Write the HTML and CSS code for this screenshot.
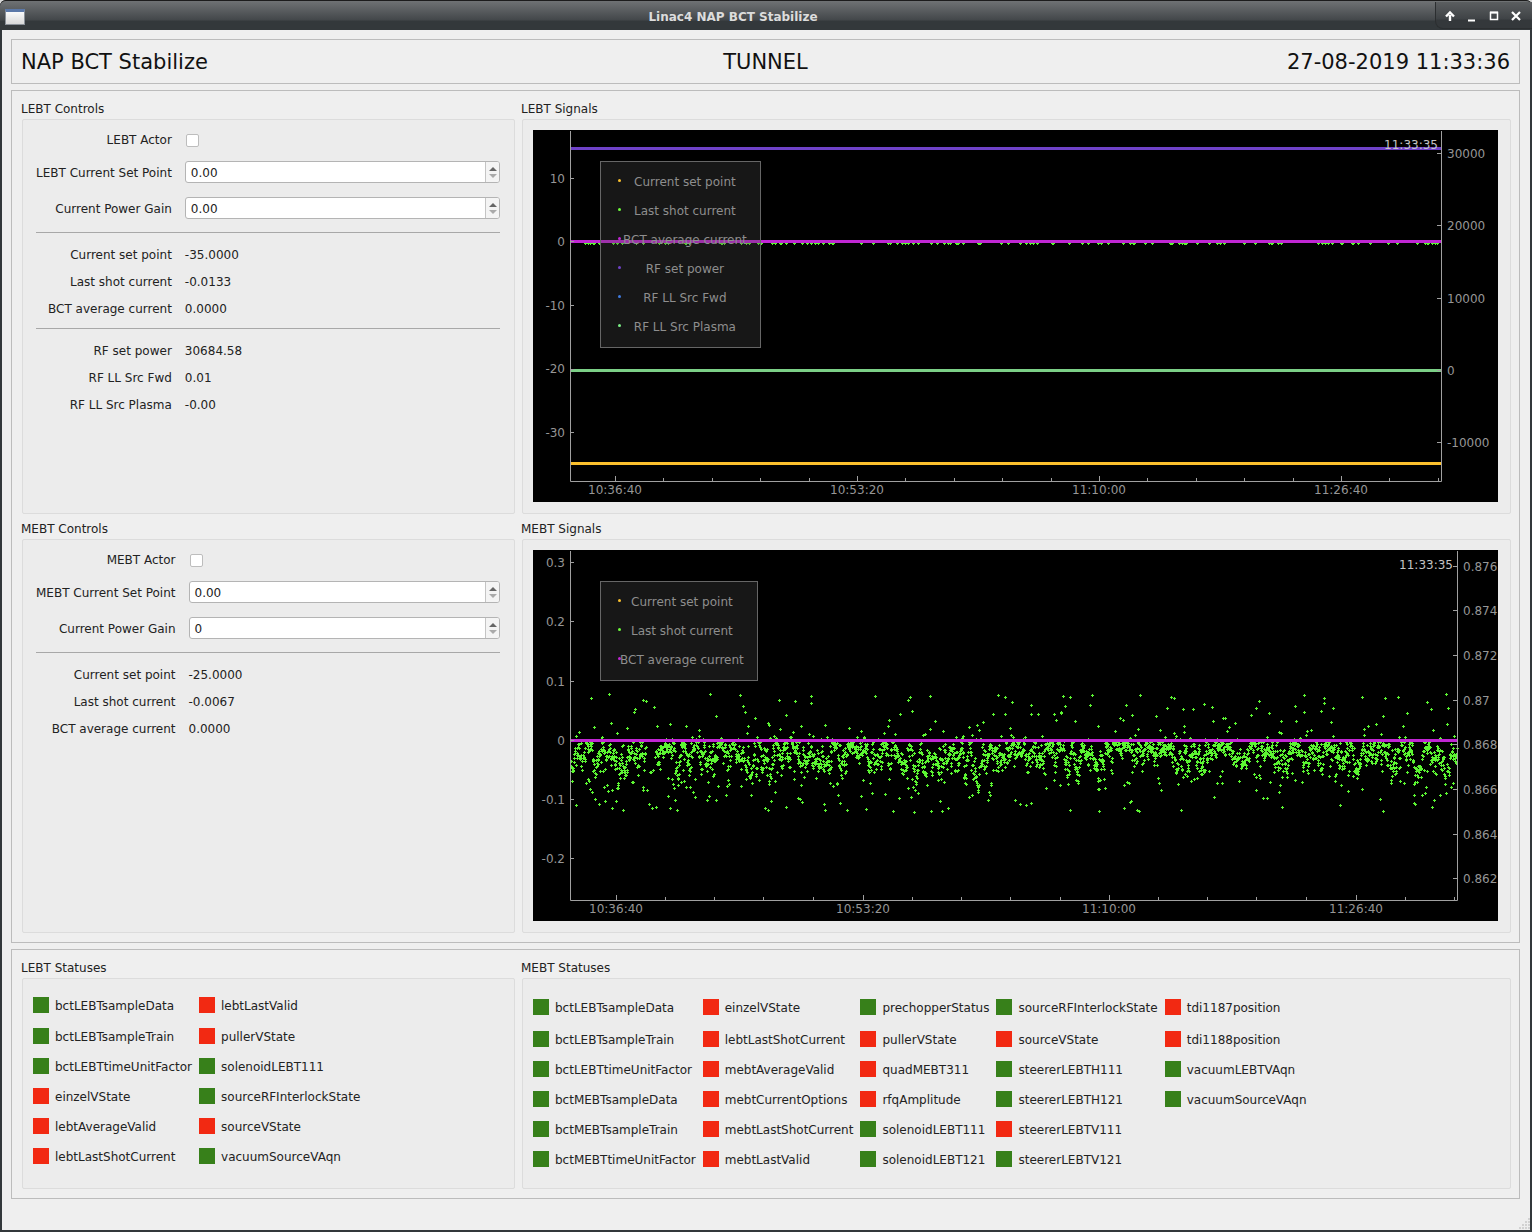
FILE: index.html
```html
<!DOCTYPE html>
<html lang="en">
<head>
    <meta charset="UTF-8">
    <title>Linac4 NAP BCT Stabilize</title>
    <link rel="stylesheet" href="styles.css">
</head>
<body>
<div class="window">
    <div class="titlebar">
        <span class="window-icon"></span>
        <span class="window-title">Linac4 NAP BCT Stabilize</span>
        <div class="window-buttons">
            <svg viewBox="0 0 88 16" width="88" height="16">
                <path d="M7 13V7M3 8.5L7 4.5L11 8.5" fill="none" stroke="#fff" stroke-width="2.4"/>
                <path d="M25 12.5h7" fill="none" stroke="#fff" stroke-width="2"/>
                <path d="M47.5 4.5h7v7h-7z" fill="none" stroke="#fff" stroke-width="1.5"/>
                <path d="M47 4.5h8" fill="none" stroke="#fff" stroke-width="2"/>
                <path d="M69 4L77 12M77 4L69 12" fill="none" stroke="#fff" stroke-width="2.2"/>
            </svg>
        </div>
    </div>

    <div class="content">
        <!-- header -->
        <div class="box header">
            <span>NAP BCT Stabilize</span>
            <span>TUNNEL</span>
            <span class="header-date">27-08-2019 11:33:36</span>
        </div>

        <!-- controls and signals -->
        <div class="box main-grid">
            <section class="group">
                <h2>LEBT Controls</h2>
                <div class="group-body form">
                    <label class="form-label">LEBT Actor</label>
                    <span class="checkbox"></span>
                    <label class="form-label spaced">LEBT Current Set Point</label>
                    <div class="spin spaced"><span class="spin-value">0.00</span><span class="spin-arrows"><i class="up"></i><i class="down"></i></span></div>
                    <label class="form-label spaced">Current Power Gain</label>
                    <div class="spin spaced"><span class="spin-value">0.00</span><span class="spin-arrows"><i class="up"></i><i class="down"></i></span></div>
                    <hr class="rule first">
                    <label class="read-label">Current set point</label><span class="read-value">-35.0000</span>
                    <label class="read-label">Last shot current</label><span class="read-value">-0.0133</span>
                    <label class="read-label">BCT average current</label><span class="read-value">0.0000</span>
                    <hr class="rule">
                    <label class="read-label">RF set power</label><span class="read-value">30684.58</span>
                    <label class="read-label">RF LL Src Fwd</label><span class="read-value">0.01</span>
                    <label class="read-label">RF LL Src Plasma</label><span class="read-value">-0.00</span>
                </div>
            </section>

            <section class="group">
                <h2>LEBT Signals</h2>
                <div class="group-body plot-wrap">
                    <div class="plot">
                        <svg class="plot-svg" viewBox="0 0 965 372" width="965" height="372">
                            <path id="lebtDots" class="dots"/>
                            <path class="curve" stroke="#6f42c8" d="M38 18.5H908"/>
                            <path class="curve" stroke="#c026d3" d="M38 111.5H908"/>
                            <path class="curve" stroke="#7bcf86" d="M38 240.5H908"/>
                            <path class="curve" stroke="#fbc02d" d="M38 333.5H908"/>
                            <path class="axis" d="M37.5 1V351.5H908.5V1"/>
                            <path class="axis" d="M37 48.5h4M37 111.5h4M37 175.5h4M37 239.5h4M37 302.5h4M904 23.5h4M904 95.5h4M904 168.5h4M904 240.5h4M904 312.5h4"/>
                            <path class="axis" d="M82.5 346v5M324.5 346v5M566.5 346v5M808.5 346v5M130.5 348v3M179.5 348v3M227.5 348v3M276.5 348v3M372.5 348v3M421.5 348v3M469.5 348v3M518.5 348v3M614.5 348v3M663.5 348v3M711.5 348v3M760.5 348v3M856.5 348v3M905.5 348v3"/>
                            <g class="tick-left">
                                <text x="32" y="53">10</text><text x="32" y="116">0</text><text x="32" y="180">-10</text><text x="32" y="243">-20</text><text x="32" y="307">-30</text>
                            </g>
                            <g class="tick-right">
                                <text x="914" y="28">30000</text><text x="914" y="100">20000</text><text x="914" y="173">10000</text><text x="914" y="245">0</text><text x="914" y="317">-10000</text>
                            </g>
                            <g class="tick-bottom">
                                <text x="82" y="364">10:36:40</text><text x="324" y="364">10:53:20</text><text x="566" y="364">11:10:00</text><text x="808" y="364">11:26:40</text>
                            </g>
                            <text class="plot-time" x="905" y="19">11:33:35</text>
                        </svg>
                        <div class="legend legend-long">
                            <i style="color:#fbc02d"></i><span>Current set point</span>
                            <i style="color:#6dfc3c"></i><span>Last shot current</span>
                            <i style="color:#c026d3"></i><span>BCT average current</span>
                            <i style="color:#6f42c8"></i><span>RF set power</span>
                            <i style="color:#3f7be0"></i><span>RF LL Src Fwd</span>
                            <i style="color:#7bef86"></i><span>RF LL Src Plasma</span>
                        </div>
                    </div>
                </div>
            </section>

            <section class="group">
                <h2>MEBT Controls</h2>
                <div class="group-body form">
                    <label class="form-label">MEBT Actor</label>
                    <span class="checkbox"></span>
                    <label class="form-label spaced">MEBT Current Set Point</label>
                    <div class="spin spaced"><span class="spin-value">0.00</span><span class="spin-arrows"><i class="up"></i><i class="down"></i></span></div>
                    <label class="form-label spaced">Current Power Gain</label>
                    <div class="spin spaced"><span class="spin-value">0</span><span class="spin-arrows"><i class="up"></i><i class="down"></i></span></div>
                    <hr class="rule first">
                    <label class="read-label">Current set point</label><span class="read-value">-25.0000</span>
                    <label class="read-label">Last shot current</label><span class="read-value">-0.0067</span>
                    <label class="read-label">BCT average current</label><span class="read-value">0.0000</span>
                </div>
            </section>

            <section class="group">
                <h2>MEBT Signals</h2>
                <div class="group-body plot-wrap">
                    <div class="plot">
                        <svg class="plot-svg" viewBox="0 0 965 371" width="965" height="371">
                            <path id="mebtDots" class="dots"/>
                            <path class="curve" stroke="#c026d3" d="M38 190.5H924"/>
                            <path class="axis" d="M37.5 1V350.5H924.5V1"/>
                            <path class="axis" d="M37 12.5h4M37 71.5h4M37 131.5h4M37 190.5h4M37 249.5h4M37 308.5h4M920 16.5h4M920 60.5h4M920 105.5h4M920 150.5h4M920 194.5h4M920 239.5h4M920 284.5h4M920 328.5h4"/>
                            <path class="axis" d="M83.5 345v5M330.5 345v5M576.5 345v5M823.5 345v5M132.5 347v3M181.5 347v3M230.5 347v3M280.5 347v3M379.5 347v3M428.5 347v3M477.5 347v3M527.5 347v3M625.5 347v3M674.5 347v3M723.5 347v3M773.5 347v3M872.5 347v3M921.5 347v3"/>
                            <g class="tick-left">
                                <text x="32" y="17">0.3</text><text x="32" y="76">0.2</text><text x="32" y="136">0.1</text><text x="32" y="195">0</text><text x="32" y="254">-0.1</text><text x="32" y="313">-0.2</text>
                            </g>
                            <g class="tick-right">
                                <text x="930" y="21">0.876</text><text x="930" y="65">0.874</text><text x="930" y="110">0.872</text><text x="930" y="155">0.87</text><text x="930" y="199">0.868</text><text x="930" y="244">0.866</text><text x="930" y="289">0.864</text><text x="930" y="333">0.862</text>
                            </g>
                            <g class="tick-bottom">
                                <text x="83" y="363">10:36:40</text><text x="330" y="363">10:53:20</text><text x="576" y="363">11:10:00</text><text x="823" y="363">11:26:40</text>
                            </g>
                            <text class="plot-time" x="920" y="19">11:33:35</text>
                        </svg>
                        <div class="legend">
                            <i style="color:#fbc02d"></i><span>Current set point</span>
                            <i style="color:#6dfc3c"></i><span>Last shot current</span>
                            <i style="color:#c026d3"></i><span>BCT average current</span>
                        </div>
                    </div>
                </div>
            </section>
        </div>

        <!-- statuses -->
        <div class="box status-grid">
            <section class="group">
                <h2>LEBT Statuses</h2>
                <div class="group-body status-list status-lebt">
                    <div class="status"><b class="ok"></b>bctLEBTsampleData</div>
                    <div class="status"><b class="ok"></b>bctLEBTsampleTrain</div>
                    <div class="status"><b class="ok"></b>bctLEBTtimeUnitFactor</div>
                    <div class="status"><b class="bad"></b>einzelVState</div>
                    <div class="status"><b class="bad"></b>lebtAverageValid</div>
                    <div class="status"><b class="bad"></b>lebtLastShotCurrent</div>
                    <div class="status"><b class="bad"></b>lebtLastValid</div>
                    <div class="status"><b class="bad"></b>pullerVState</div>
                    <div class="status"><b class="ok"></b>solenoidLEBT111</div>
                    <div class="status"><b class="ok"></b>sourceRFInterlockState</div>
                    <div class="status"><b class="bad"></b>sourceVState</div>
                    <div class="status"><b class="ok"></b>vacuumSourceVAqn</div>
                </div>
            </section>
            <section class="group">
                <h2>MEBT Statuses</h2>
                <div class="group-body status-list status-mebt">
                    <div class="status"><b class="ok"></b>bctLEBTsampleData</div>
                    <div class="status"><b class="ok"></b>bctLEBTsampleTrain</div>
                    <div class="status"><b class="ok"></b>bctLEBTtimeUnitFactor</div>
                    <div class="status"><b class="ok"></b>bctMEBTsampleData</div>
                    <div class="status"><b class="ok"></b>bctMEBTsampleTrain</div>
                    <div class="status"><b class="ok"></b>bctMEBTtimeUnitFactor</div>
                    <div class="status"><b class="bad"></b>einzelVState</div>
                    <div class="status"><b class="bad"></b>lebtLastShotCurrent</div>
                    <div class="status"><b class="bad"></b>mebtAverageValid</div>
                    <div class="status"><b class="bad"></b>mebtCurrentOptions</div>
                    <div class="status"><b class="bad"></b>mebtLastShotCurrent</div>
                    <div class="status"><b class="bad"></b>mebtLastValid</div>
                    <div class="status"><b class="ok"></b>prechopperStatus</div>
                    <div class="status"><b class="bad"></b>pullerVState</div>
                    <div class="status"><b class="bad"></b>quadMEBT311</div>
                    <div class="status"><b class="bad"></b>rfqAmplitude</div>
                    <div class="status"><b class="ok"></b>solenoidLEBT111</div>
                    <div class="status"><b class="ok"></b>solenoidLEBT121</div>
                    <div class="status"><b class="ok"></b>sourceRFInterlockState</div>
                    <div class="status"><b class="bad"></b>sourceVState</div>
                    <div class="status"><b class="ok"></b>steererLEBTH111</div>
                    <div class="status"><b class="ok"></b>steererLEBTH121</div>
                    <div class="status"><b class="bad"></b>steererLEBTV111</div>
                    <div class="status"><b class="ok"></b>steererLEBTV121</div>
                    <div class="status"><b class="bad"></b>tdi1187position</div>
                    <div class="status"><b class="bad"></b>tdi1188position</div>
                    <div class="status"><b class="ok"></b>vacuumLEBTVAqn</div>
                    <div class="status"><b class="ok"></b>vacuumSourceVAqn</div>
                </div>
            </section>
        </div>

        <svg class="size-grip" viewBox="0 0 12 12" width="12" height="12">
            <path d="M10 1h2v2h-2zM10 4h2v2h-2zM7 4h2v2h-2zM10 7h2v2h-2zM7 7h2v2h-2zM4 7h2v2h-2zM10 10h2v2h-2zM7 10h2v2h-2zM4 10h2v2h-2zM1 10h2v2h-2z" fill="#d2d2d2"/>
        </svg>
    </div>
</div>
<script src="plots.js"></script>
</body>
</html>
```

FILE: styles.css
```css
* {
    box-sizing: border-box;
}
html, body {
    margin: 0;
    height: 100%;
}
body {
    background-color: #d8d8d8;
    font-family: "DejaVu Sans", sans-serif;
    font-size: 12px;
    color: #222;
    overflow: hidden;
}
.window {
    width: 1532px;
    height: 1232px;
    display: flex;
    flex-direction: column;
    background-color: #33383b;
    border-radius: 6px 6px 0 0;
    padding: 0 2px 2px;
}
.titlebar {
    height: 30px;
    margin: 0 -2px;
    display: flex;
    align-items: center;
    border-radius: 6px 6px 0 0;
    border-top: 1px solid #1c1c1c;
    background: linear-gradient(#6f7274, #43474a 19px, #33383b 20px);
}
.window-icon {
    width: 20px;
    height: 16px;
    margin: 2px 0 0 5px;
    border: 1px solid #8a9098;
    border-top: 3px solid #5b78a8;
    background: linear-gradient(#fafafa, #d8d8d8);
}
.window-title {
    flex: 1;
    padding: 3px 0 0 6px;
    text-align: center;
    color: #dcdcdc;
    font-weight: bold;
    font-size: 12px;
}
.window-buttons {
    width: 97px;
    height: 27px;
    padding: 6px 0 0 7px;
    background: linear-gradient(#5b5e60, #3f4346 17px, #34383b 18px);
    border-left: 1px solid #2b2e30;
    border-bottom: 1px solid #2b2e30;
    border-radius: 0 0 0 8px;
}
.window-buttons svg {
    display: block;
}
.content {
    flex: 1;
    position: relative;
    background-color: #efefef;
    padding: 9px 10px 0 9px;
}
.size-grip {
    position: absolute;
    right: 0;
    bottom: 1px;
}
.box {
    border: 1px solid #bcbcbc;
}
.header {
    height: 45px;
    margin-bottom: 6px;
    padding: 0 9px;
    display: grid;
    grid-template-columns: 1fr auto 1fr;
    align-items: center;
    font-size: 21px;
    color: #111;
}
.header-date {
    text-align: right;
}
.main-grid {
    height: 853px;
    margin-bottom: 6px;
    padding: 8px 9px 0 10px;
    display: grid;
    grid-template-columns: 493px 989px;
    grid-template-rows: 415px 414px;
    gap: 5px 7px;
}
.status-grid {
    height: 250px;
    padding: 8px 9px 0 10px;
    display: grid;
    grid-template-columns: 493px 989px;
    column-gap: 7px;
    grid-template-rows: 231px;
}
.group {
    display: flex;
    flex-direction: column;
    min-width: 0;
}
.group h2 {
    margin: 0;
    height: 20px;
    line-height: 20px;
    font-size: 12px;
    font-weight: normal;
    color: #222;
    margin-left: -1px;
}
.group-body {
    flex: 1;
    background-color: #ececec;
    border: 1px solid #dcdcdc;
    border-radius: 2px;
}

/* form */
.form {
    display: grid;
    grid-template-columns: auto 1fr;
    align-content: start;
    column-gap: 13px;
    padding: 11px 14px 0 13px;
}
.form-label {
    text-align: right;
    align-self: center;
    padding-top: 2px;
}
.spaced {
    margin-top: 14px;
}
.checkbox {
    width: 13px;
    height: 13px;
    margin: 2px 0 0 1px;
    align-self: center;
    background-color: #fff;
    border: 1px solid #bdbdbd;
    border-radius: 2px;
}
.spin {
    height: 22px;
    display: flex;
    background-color: #fff;
    border: 1px solid #b4b4b4;
    border-radius: 3px;
}
.spin-value {
    flex: 1;
    line-height: 22px;
    padding-left: 5px;
}
.spin-arrows {
    width: 14px;
    background-color: #f4f4f4;
    border-left: 1px solid #c4c4c4;
    border-radius: 0 2px 2px 0;
    display: flex;
    flex-direction: column;
    align-items: center;
    justify-content: center;
    gap: 3px;
}
.spin-arrows i {
    border-left: 4px solid transparent;
    border-right: 4px solid transparent;
}
.spin-arrows .up {
    border-bottom: 4px solid #666;
}
.spin-arrows .down {
    border-top: 4px solid #aaa;
}
.rule {
    grid-column: 1 / 3;
    width: 100%;
    height: 1px;
    border: 0;
    margin: 5px 0 9px;
    background-color: #a8a8a8;
}
.rule.first {
    margin-top: 13px;
}
.read-label {
    text-align: right;
    line-height: 27px;
}
.read-value {
    line-height: 27px;
}

/* plots */
.plot-wrap {
    padding: 10px 12px 0 10px;
}
.plot {
    position: relative;
    background-color: #000;
}
.plot-svg {
    display: block;
    font-size: 12px;
}
.axis {
    fill: none;
    stroke: #a0a0a0;
    stroke-width: 1;
}
.curve {
    fill: none;
    stroke-width: 3;
}
.dots {
    fill: none;
    stroke: #5cf532;
    stroke-width: 1;
}
.plot-svg text {
    fill: #969696;
}
.tick-left text {
    text-anchor: end;
}
.tick-bottom text {
    text-anchor: middle;
}
.plot-svg .plot-time {
    fill: #c4c4c4;
    text-anchor: end;
}
.legend {
    position: absolute;
    left: 67px;
    top: 31px;
    display: grid;
    grid-template-columns: 2px auto;
    grid-auto-rows: 29px;
    align-items: center;
    padding: 5px 13px 6px 17px;
    background-color: rgba(77, 77, 77, 0.3);
    border: 1px solid #666;
    color: #8e8e8e;
}
.legend-long {
    grid-template-columns: 5px auto;
}
.legend span {
    text-align: center;
}
.legend i {
    width: 3px;
    height: 3px;
    margin-top: -2px;
    background-color: currentColor;
    border-radius: 50%;
}

/* statuses */
.status-list {
    display: grid;
    grid-auto-flow: column;
    grid-auto-columns: max-content;
    column-gap: 7px;
    padding-left: 10px;
    align-content: start;
}
.status-lebt {
    grid-template-rows: 32px repeat(5, 30px);
    padding-top: 10px;
}
.status-mebt {
    grid-template-rows: 34px repeat(5, 30px);
    padding-top: 11px;
}
.status {
    display: flex;
    align-items: center;
    gap: 6px;
    padding-top: 2px;
}
.status b {
    width: 16px;
    height: 16px;
    margin-top: -2px;
}
.ok {
    background-color: #37801a;
}
.bad {
    background-color: #f22912;
}
```

FILE: plots.js
```js
// small seeded random, so the scatter is the same on every load
let seed = 20190827;
function rnd() {
    seed = (seed + 0x6D2B79F5) | 0;
    let t = Math.imul(seed ^ (seed >>> 15), 1 | seed);
    t = (t + Math.imul(t ^ (t >>> 7), 61 | t)) ^ t;
    return ((t ^ (t >>> 14)) >>> 0) / 4294967296;
}

function gauss() {
    return (rnd() + rnd() + rnd() + rnd() - 2) * 1.7;
}

function plus(x, y) {
    x = Math.round(x);
    y = Math.round(y);
    return 'M' + (x - 1) + ' ' + (y + 0.5) + 'h3M' + (x + 0.5) + ' ' + (y - 1) + 'v3';
}

// MEBT last shot current, strands of correlated shots around one band
let mebt = '';
let strand = 0;
for (let i = 0; i < 3000; i++) {
    let x = 38 + i * 886 / 3000;
    let r = rnd();
    let y;
    strand = strand * 0.85 + gauss() * 5;
    if (r < 0.83) {
        // small hole in the data just after the first minutes
        if (x > 113 && x < 122) continue;
        y = 205 + strand + gauss() * 4;
        if (y < 191) y = 191 + (191 - y) * 0.8;
    } else if (r < 0.91) {
        y = 190 - Math.pow(rnd(), 2.4) * 46;
    } else {
        y = 220 + Math.pow(rnd(), 1.6) * 42;
    }
    mebt += plus(x, y);
}
document.getElementById('mebtDots').setAttribute('d', mebt);

// LEBT last shot current sits just under the average line
let lebt = '';
for (let i = 0; i < 130; i++) {
    lebt += plus(38 + rnd() * 870, 113);
}
document.getElementById('lebtDots').setAttribute('d', lebt);
```
